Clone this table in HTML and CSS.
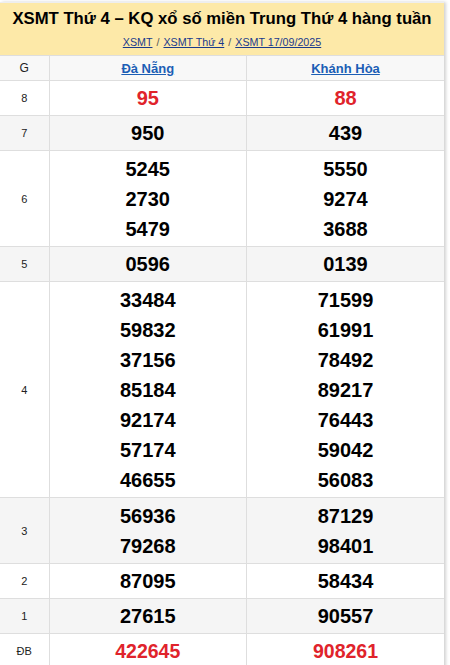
FILE: index.html
```html
<!DOCTYPE html>
<html lang="vi">
<head>
<meta charset="utf-8">
<link rel="stylesheet" href="styles.css">
</head>
<body>
<div class="box">
  <div class="head">
    <h1 class="title">XSMT Thứ 4 – KQ xổ số miền Trung Thứ 4 hàng tuần</h1>
    <div class="crumbs"><a href="#">XSMT</a><span class="sep">/</span><a href="#">XSMT Thứ 4</a><span class="sep">/</span><a href="#">XSMT 17/09/2025</a></div>
  </div>
  <table class="kq">
    <colgroup><col class="c-g"><col class="c-p"><col class="c-p"></colgroup>
    <tr class="hdr"><td class="lbl">G</td><td><a href="#">Đà Nẵng</a></td><td><a href="#">Khánh Hòa</a></td></tr>
    <tr class="r1"><td class="lbl">8</td><td><div class="n red">95</div></td><td><div class="n red">88</div></td></tr>
    <tr class="r1 alt"><td class="lbl">7</td><td><div class="n">950</div></td><td><div class="n">439</div></td></tr>
    <tr class="rm"><td class="lbl">6</td><td><div class="n">5245</div><div class="n">2730</div><div class="n">5479</div></td><td><div class="n">5550</div><div class="n">9274</div><div class="n">3688</div></td></tr>
    <tr class="r1 alt"><td class="lbl">5</td><td><div class="n">0596</div></td><td><div class="n">0139</div></td></tr>
    <tr class="rm"><td class="lbl">4</td><td><div class="n">33484</div><div class="n">59832</div><div class="n">37156</div><div class="n">85184</div><div class="n">92174</div><div class="n">57174</div><div class="n">46655</div></td><td><div class="n">71599</div><div class="n">61991</div><div class="n">78492</div><div class="n">89217</div><div class="n">76443</div><div class="n">59042</div><div class="n">56083</div></td></tr>
    <tr class="rm alt"><td class="lbl">3</td><td><div class="n">56936</div><div class="n">79268</div></td><td><div class="n">87129</div><div class="n">98401</div></td></tr>
    <tr class="r1"><td class="lbl">2</td><td><div class="n">87095</div></td><td><div class="n">58434</div></td></tr>
    <tr class="r1 alt"><td class="lbl">1</td><td><div class="n">27615</div></td><td><div class="n">90557</div></td></tr>
    <tr class="r1"><td class="lbl">ĐB</td><td><div class="n red big">422645</div></td><td><div class="n red big">908261</div></td></tr>
  </table>
</div>
</body>
</html>
```
FILE: styles.css
```css
html, body { margin: 0; padding: 0; background: #fff; }
body { font-family: "Liberation Sans", Arial, sans-serif; color: #000; }
.box {
  width: 444px;
  margin-top: 2px;
  box-shadow: 2px 0 3px rgba(0,0,0,0.18);
  border-top: 1px solid #eee;
}
.head {
  background: #fde9a8;
  padding: 5px 0 5px;
  text-align: center;
}
.title {
  margin: 0;
  font-size: 16.7px;
  font-weight: bold;
  line-height: 22px;
  white-space: nowrap;
}
.crumbs {
  font-size: 10.7px;
  line-height: 16px;
  margin-top: 4px;
}
.crumbs a { color: #1a3a8c; text-decoration: underline; }
.crumbs .sep { color: #555; margin: 0 4px; }
.kq {
  width: 100%;
  border-collapse: collapse;
  table-layout: fixed;
}
.c-g { width: 49px; }
.kq td {
  border: 1px solid #dedede;
  text-align: center;
  vertical-align: middle;
  padding: 0;
}
.kq tr td:first-child { border-left: none; }
.kq tr td:last-child { border-right: none; }
.kq .hdr td { height: 24px; background: #f8f8f8; font-size: 13px; }
.kq .hdr a { color: #1b5eb5; font-weight: bold; text-decoration: underline; }
.kq .hdr .lbl { font-size: 12px; font-weight: normal; }
.lbl { font-size: 11px; color: #222; }
.alt td { background: #f5f5f5; }
.r1 td { height: 34px; }
.rm td { padding: 3px 0 2px; }
.n {
  font-size: 20px;
  font-weight: bold;
  line-height: 30px;
}
.red { color: #e0232b; }
.big { font-size: 19.5px; }
```
